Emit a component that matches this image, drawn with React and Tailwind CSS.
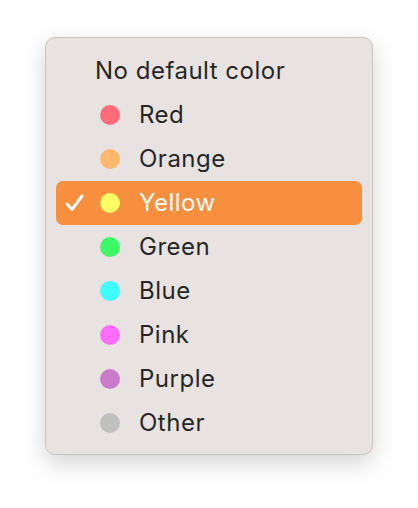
import React from 'react';

const colors = [
  { name: 'Red', dot: 'bg-[#ff6b78]' },
  { name: 'Orange', dot: 'bg-[#ffb86e]' },
  { name: 'Yellow', dot: 'bg-[#ffff66]', selected: true },
  { name: 'Green', dot: 'bg-[#3df866]' },
  { name: 'Blue', dot: 'bg-[#3cfcfd]' },
  { name: 'Pink', dot: 'bg-[#ff6dff]' },
  { name: 'Purple', dot: 'bg-[#c97ac9]' },
  { name: 'Other', dot: 'bg-[#c0c0c0]' },
];

const Check = () => (
  <svg width="19" height="18" viewBox="0 0 19 18" fill="none">
    <path d="M2 10 L7 15.5 L17 2" stroke="white" strokeWidth="3" strokeLinecap="round" strokeLinejoin="round" />
  </svg>
);

const App = () => {
  return (
    <div className="w-[418px] h-[508px] bg-white pt-[37px] pl-[45px] font-['Inter','Noto_Sans',sans-serif]">
      <div className="w-[328px] rounded-[10px] border border-[#c9c4c2] bg-[#e8e3e1] pt-[11px] pb-[9px] px-[10px] shadow-[0_8px_24px_rgba(0,0,0,0.18)]">
        <div className="h-[44px] flex items-center pl-[39px] text-[24px] tracking-[0.5px] text-[#262626]">
          No default color
        </div>
        {colors.map((c) => (
          <div
            key={c.name}
            className={`h-[44px] flex items-center rounded-[7px] text-[24px] tracking-[0.5px] ${c.selected ? 'bg-[#f78f3e] text-white' : 'text-[#262626]'}`}
          >
            <div className="w-[44px] flex justify-start pl-[9px]">
              {c.selected && <Check />}
            </div>
            <span className={`w-[20px] h-[20px] rounded-full ${c.dot}`} />
            <span className="ml-[19px]">{c.name}</span>
          </div>
        ))}
      </div>
    </div>
  );
};

export default App;
